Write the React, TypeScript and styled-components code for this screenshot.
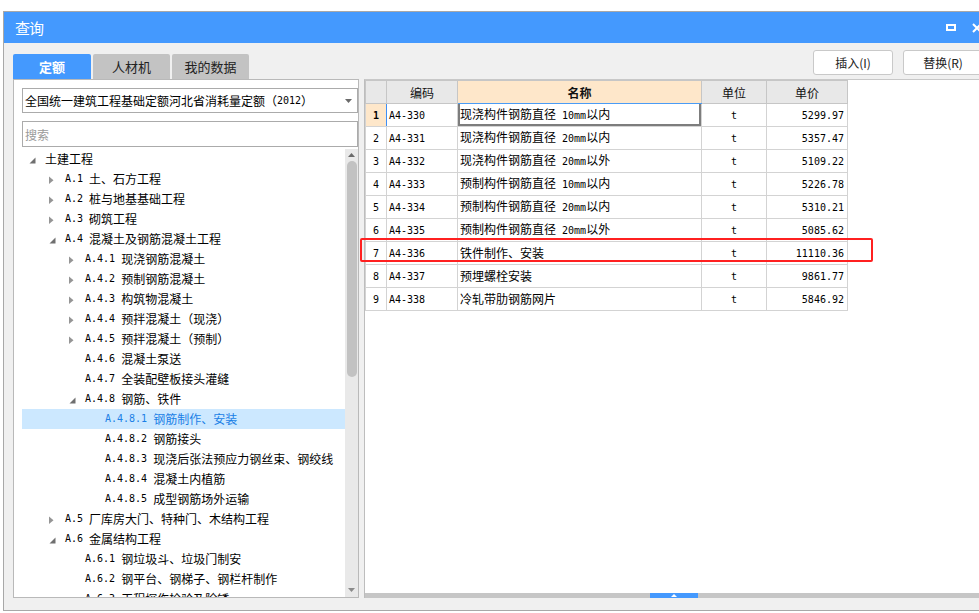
import React from "react";
import styled, { createGlobalStyle } from "styled-components";

const BLUE = "#4499fe";
const CJK = `"Noto Sans CJK SC", "Noto Sans", sans-serif`;
const MONO = `"DejaVu Sans Mono", "Liberation Mono", monospace`;

const GlobalStyle = createGlobalStyle`
  html, body { margin: 0; padding: 0; background: #ffffff; }
  body { font-family: ${CJK}; font-size: 12px; color: #000; overflow: hidden; }
  * { box-sizing: border-box; }
`;

const Page = styled.div`
  width: 979px;
  height: 613px;
  overflow: hidden;
  padding: 11px 0 0 3px;
`;

const Dialog = styled.div`
  width: 990px;
  height: 600px;
  border: 1px solid #a8a8a8;
  background: #f0f0f0;
  display: flex;
  flex-direction: column;
`;

const TitleBar = styled.div`
  height: 31px;
  flex: none;
  background: ${BLUE};
  display: flex;
  align-items: center;
  padding: 0 10px 0 11px;
`;

const Title = styled.div`
  color: #fff;
  font-size: 15px;
  line-height: 31px;
  letter-spacing: -1px;
`;

const WinControls = styled.div`
  margin-left: auto;
  display: flex;
  align-items: center;
  gap: 16px;
`;

const RestoreIcon = styled.span`
  width: 10px;
  height: 7px;
  border: 2px solid #fff;
  display: block;
`;

const Toolbar = styled.div`
  height: 36px;
  flex: none;
  display: flex;
  align-items: flex-end;
  padding: 0 9px 0 9px;
`;

const Tabs = styled.div`
  display: flex;
  gap: 2px;
`;

const Tab = styled.div<{ $active?: boolean }>`
  width: ${(p) => (p.$active ? 78 : 77)}px;
  height: 25px;
  border-radius: 2px 2px 0 0;
  background: ${(p) => (p.$active ? BLUE : "#c3c3c3")};
  color: ${(p) => (p.$active ? "#fff" : "#222")};
  font-weight: ${(p) => (p.$active ? 700 : 400)};
  font-size: 13px;
  display: flex;
  align-items: center;
  justify-content: center;
`;

const Buttons = styled.div`
  margin-left: auto;
  align-self: flex-start;
  margin-top: 7px;
  display: flex;
  gap: 10px;
`;

const Button = styled.div`
  width: 80px;
  height: 25px;
  border: 1px solid #c9c9c9;
  border-radius: 3px;
  background: #fff;
  font-size: 12px;
  color: #222;
  display: flex;
  align-items: center;
  justify-content: center;
`;

const Main = styled.div`
  height: 519px;
  flex: none;
  display: flex;
  gap: 5px;
  padding-left: 9px;
`;

const LeftPanel = styled.div`
  width: 346px;
  flex: none;
  background: #fff;
  border: 1px solid #b9b9b9;
  padding: 8px 0 0 8px;
  display: flex;
  flex-direction: column;
`;

const Combo = styled.div`
  height: 25px;
  flex: none;
  border: 1px solid #ababab;
  display: flex;
  align-items: center;
  padding: 0 5px 0 2px;
  font-size: 12px;
  white-space: nowrap;
`;

const ComboArrow = styled.svg`
  margin-left: auto;
`;

const Search = styled.input`
  margin-top: 8px;
  height: 26px;
  flex: none;
  border: 1px solid #ababab;
  padding: 0 2px;
  font-family: ${CJK};
  font-size: 12px;
  outline: none;
  &::placeholder { color: #9a9a9a; }
`;

const TreeArea = styled.div`
  margin-top: 2px;
  flex: 1;
  min-height: 0;
  display: flex;
`;

const TreeList = styled.div`
  flex: 1;
  overflow: hidden;
`;

const TreeRow = styled.div<{ $level: number; $selected?: boolean }>`
  height: 20px;
  display: flex;
  align-items: center;
  padding-left: ${(p) => 7 + p.$level * 20}px;
  background: ${(p) => (p.$selected ? "#cce8ff" : "transparent")};
  color: ${(p) => (p.$selected ? "#1a7fe6" : "#000")};
  white-space: nowrap;
  font-size: 12px;
  line-height: 20px;
`;

const Toggle = styled.span`
  width: 16px;
  height: 20px;
  flex: none;
  display: flex;
  align-items: center;
`;

const Latin = styled.span`
  font-family: ${MONO};
  font-size: 10px;
  white-space: pre;
`;

const ScrollBar = styled.div`
  width: 13px;
  flex: none;
  background: #e9e9e9;
  display: flex;
  flex-direction: column;
  align-items: center;
`;

const Thumb = styled.div`
  margin-top: 4px;
  width: 10px;
  height: 216px;
  border-radius: 5px;
  background: #c2c2c2;
`;

const ScrollSpacer = styled.div`
  flex: 1;
`;

const ArrowSvg = styled.svg<{ $top?: boolean }>`
  flex: none;
  margin-top: ${(p) => (p.$top ? 4 : 0)}px;
  margin-bottom: ${(p) => (p.$top ? 0 : 5)}px;
`;

const RightPanel = styled.div`
  flex: 1;
  background: #fff;
  border-left: 1px solid #bdbdbd;
  border-top: 1px solid #c8c8c8;
  display: flex;
  flex-direction: column;
  position: relative;
`;

const TableArea = styled.div`
  flex: 1;
  min-height: 0;
  overflow: hidden;
`;

const Grid = styled.table`
  border-collapse: collapse;
  table-layout: fixed;
  width: 482px;
  font-size: 12px;
`;

const Th = styled.th<{ $active?: boolean }>`
  height: 23px;
  padding: 0;
  border: 1px solid #c6c6c6;
  border-bottom: 1px solid ${(p) => (p.$active ? "#4a9cf5" : "#c6c6c6")};
  background: ${(p) => (p.$active ? "#fee7ca" : "#e8e8e8")};
  font-weight: ${(p) => (p.$active ? 700 : 400)};
  font-size: 12px;
  color: #111;
  text-align: center;
`;

const Td = styled.td<{ $align?: "left" | "center" | "right"; $focus?: boolean }>`
  height: 23px;
  padding: 0 ${(p) => (p.$align === "right" ? 3 : 0)}px 0 ${(p) => (p.$align === "left" ? 2 : 0)}px;
  border: 1px solid #d3d3d3;
  text-align: ${(p) => p.$align ?? "center"};
  white-space: nowrap;
  overflow: hidden;
  line-height: 20px;
  box-shadow: ${(p) =>
    p.$focus ? "inset 2px 0 #7d7d7d, inset -2px 0 #7d7d7d, inset 0 -2px #7d7d7d" : "none"};
`;

const NumTd = styled.td<{ $current?: boolean }>`
  height: 23px;
  padding: 0;
  border: 1px solid #d3d3d3;
  border-right: 1px solid ${(p) => (p.$current ? "#3f8ff5" : "#d3d3d3")};
  background: ${(p) => (p.$current ? "#fee7ca" : "#fff")};
  text-align: center;
  font-family: ${MONO};
  font-size: 10px;
  font-weight: ${(p) => (p.$current ? 700 : 400)};
`;

const Splitter = styled.div`
  height: 5px;
  flex: none;
  background: #c6c6c6;
  display: flex;
  padding-left: 285px;
`;

const SplitHandle = styled.div`
  width: 48px;
  height: 5px;
  background: ${BLUE};
  display: flex;
  align-items: center;
  justify-content: center;
`;

const Annotation = styled.div`
  position: absolute;
  left: -5px;
  top: 158px;
  width: 513px;
  height: 24px;
  border: 2px solid #ff2020;
  border-radius: 2px;
  pointer-events: none;
`;

const Footer = styled.div`
  flex: 1;
`;

function mixed(s: string) {
  return s
    .split(/([\x20-\x7e]+)/)
    .filter((p) => p !== "")
    .map((p, i) =>
      /[\x20-\x7e]/.test(p) ? <Latin key={i}>{p}</Latin> : <React.Fragment key={i}>{p}</React.Fragment>
    );
}

type Node = { level: number; label: string; state?: "open" | "closed"; selected?: boolean };

const tree: Node[] = [
  { level: 0, label: "土建工程", state: "open" },
  { level: 1, label: "A.1 土、石方工程", state: "closed" },
  { level: 1, label: "A.2 桩与地基基础工程", state: "closed" },
  { level: 1, label: "A.3 砌筑工程", state: "closed" },
  { level: 1, label: "A.4 混凝土及钢筋混凝土工程", state: "open" },
  { level: 2, label: "A.4.1 现浇钢筋混凝土", state: "closed" },
  { level: 2, label: "A.4.2 预制钢筋混凝土", state: "closed" },
  { level: 2, label: "A.4.3 构筑物混凝土", state: "closed" },
  { level: 2, label: "A.4.4 预拌混凝土（现浇）", state: "closed" },
  { level: 2, label: "A.4.5 预拌混凝土（预制）", state: "closed" },
  { level: 2, label: "A.4.6 混凝土泵送" },
  { level: 2, label: "A.4.7 全装配壁板接头灌缝" },
  { level: 2, label: "A.4.8 钢筋、铁件", state: "open" },
  { level: 3, label: "A.4.8.1 钢筋制作、安装", selected: true },
  { level: 3, label: "A.4.8.2 钢筋接头" },
  { level: 3, label: "A.4.8.3 现浇后张法预应力钢丝束、钢绞线" },
  { level: 3, label: "A.4.8.4 混凝土内植筋" },
  { level: 3, label: "A.4.8.5 成型钢筋场外运输" },
  { level: 1, label: "A.5 厂库房大门、特种门、木结构工程", state: "closed" },
  { level: 1, label: "A.6 金属结构工程", state: "open" },
  { level: 2, label: "A.6.1 钢垃圾斗、垃圾门制安" },
  { level: 2, label: "A.6.2 钢平台、钢梯子、钢栏杆制作" },
  { level: 2, label: "A.6.3 工程探伤检验及除锈" },
];

const rows: [string, string, string, string][] = [
  ["A4-330", "现浇构件钢筋直径 10mm以内", "t", "5299.97"],
  ["A4-331", "现浇构件钢筋直径 20mm以内", "t", "5357.47"],
  ["A4-332", "现浇构件钢筋直径 20mm以外", "t", "5109.22"],
  ["A4-333", "预制构件钢筋直径 10mm以内", "t", "5226.78"],
  ["A4-334", "预制构件钢筋直径 20mm以内", "t", "5310.21"],
  ["A4-335", "预制构件钢筋直径 20mm以外", "t", "5085.62"],
  ["A4-336", "铁件制作、安装", "t", "11110.36"],
  ["A4-337", "预埋螺栓安装", "t", "9861.77"],
  ["A4-338", "冷轧带肋钢筋网片", "t", "5846.92"],
];

function ToggleIcon({ state }: { state?: "open" | "closed" }) {
  if (!state) return <Toggle />;
  return (
    <Toggle>
      <svg width="10" height="10" viewBox="0 0 10 10">
        {state === "open" ? (
          <polygon points="0.5,9.5 6.5,3.5 6.5,9.5" fill="#6f6f6f" />
        ) : (
          <polygon points="0,2.5 4.5,6.2 0,10" fill="#959595" />
        )}
      </svg>
    </Toggle>
  );
}

export default function App() {
  return (
    <>
      <GlobalStyle />
      <Page>
        <Dialog>
          <TitleBar>
            <Title>查询</Title>
            <WinControls>
              <RestoreIcon />
              <svg width="10" height="10" viewBox="0 0 10 10">
                <path d="M1 1 L9 9 M9 1 L1 9" stroke="#fff" strokeWidth="2" />
              </svg>
            </WinControls>
          </TitleBar>
          <Toolbar>
            <Tabs>
              <Tab $active>定额</Tab>
              <Tab>人材机</Tab>
              <Tab>我的数据</Tab>
            </Tabs>
            <Buttons>
              <Button>插入(I)</Button>
              <Button>替换(R)</Button>
            </Buttons>
          </Toolbar>
          <Main>
            <LeftPanel>
              <Combo>
                {mixed("全国统一建筑工程基础定额河北省消耗量定额（2012）")}
                <ComboArrow width="7" height="4" viewBox="0 0 7 4">
                  <polygon points="0,0 7,0 3.5,4" fill="#6a6a6a" />
                </ComboArrow>
              </Combo>
              <Search placeholder="搜索" />
              <TreeArea>
                <TreeList>
                  {tree.map((n, i) => (
                    <TreeRow key={i} $level={n.level} $selected={n.selected}>
                      <ToggleIcon state={n.state} />
                      {mixed(n.label)}
                    </TreeRow>
                  ))}
                </TreeList>
                <ScrollBar>
                  <ArrowSvg $top width="7" height="4" viewBox="0 0 7 4">
                    <polygon points="0,4 7,4 3.5,0" fill="#6a6a6a" />
                  </ArrowSvg>
                  <Thumb />
                  <ScrollSpacer />
                  <ArrowSvg width="7" height="4" viewBox="0 0 7 4">
                    <polygon points="0,0 7,0 3.5,4" fill="#8a8a8a" />
                  </ArrowSvg>
                </ScrollBar>
              </TreeArea>
            </LeftPanel>
            <RightPanel>
              <TableArea>
                <Grid>
                  <colgroup>
                    <col style={{ width: 21 }} />
                    <col style={{ width: 71 }} />
                    <col style={{ width: 244 }} />
                    <col style={{ width: 65 }} />
                    <col style={{ width: 81 }} />
                  </colgroup>
                  <thead>
                    <tr>
                      <Th />
                      <Th>编码</Th>
                      <Th $active>名称</Th>
                      <Th>单位</Th>
                      <Th>单价</Th>
                    </tr>
                  </thead>
                  <tbody>
                    {rows.map((r, i) => (
                      <tr key={i}>
                        <NumTd $current={i === 0}>{i + 1}</NumTd>
                        <Td $align="left">{mixed(r[0])}</Td>
                        <Td $align="left" $focus={i === 0}>
                          {mixed(r[1])}
                        </Td>
                        <Td>{mixed(r[2])}</Td>
                        <Td $align="right">{mixed(r[3])}</Td>
                      </tr>
                    ))}
                  </tbody>
                </Grid>
              </TableArea>
              <Splitter>
                <SplitHandle>
                  <svg width="6" height="3" viewBox="0 0 6 3">
                    <polygon points="0,3 6,3 3,0" fill="#fff" />
                  </svg>
                </SplitHandle>
              </Splitter>
              <Annotation />
            </RightPanel>
          </Main>
          <Footer />
        </Dialog>
      </Page>
    </>
  );
}
